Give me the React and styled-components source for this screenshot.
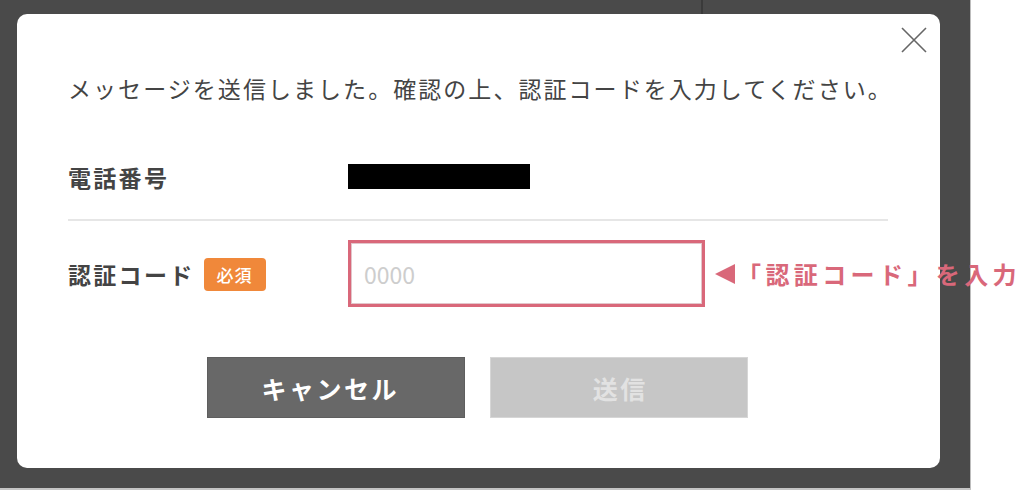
import React from "react";
import styled, { createGlobalStyle } from "styled-components";

const Global = createGlobalStyle`
  html, body { margin: 0; padding: 0; background: #fff; }
  body { font-family: "Noto Sans CJK JP", "Noto Sans", sans-serif; }
  * { box-sizing: border-box; }
`;

const Backdrop = styled.div`
  position: relative;
  width: 971px;
  height: 490px;
  background: #4a4a4a;
  border-right: 1px solid #bdbdbd;
  border-bottom: 2px solid #c4c4c4;
  padding: 14px 30px 20px 17px;
  &::before {
    content: "";
    position: absolute;
    left: 701px;
    top: 0;
    width: 2px;
    height: 14px;
    background: #3a3a3a;
  }
`;

const Modal = styled.div`
  position: relative;
  width: 923px;
  height: 454px;
  background: #fff;
  border-radius: 10px;
  padding: 59px 52px 50px 51px;
  display: flex;
  flex-direction: column;
`;

const Close = styled.button`
  position: absolute;
  top: 13px;
  right: 13px;
  width: 26px;
  height: 26px;
  padding: 0;
  border: none;
  background: none;
  display: flex;
`;

const Message = styled.p`
  margin: 0;
  height: 30px;
  line-height: 30px;
  font-size: 23px;
  letter-spacing: 2.05px;
  color: #444;
  white-space: nowrap;
`;

const Row = styled.div`
  display: flex;
  align-items: center;
  height: ${(p) => p.$h}px;
  margin-top: ${(p) => p.$mt}px;
`;

const Label = styled.div`
  width: 280px;
  flex: none;
  display: flex;
  align-items: center;
  font-size: 23px;
  font-weight: 700;
  letter-spacing: 2.3px;
  color: #444;
`;

const Badge = styled.span`
  margin-left: 9px;
  width: 62px;
  height: 33px;
  margin-top: 2px;
  border-radius: 4px;
  background: #f0883a;
  color: #fff;
  font-size: 17px;
  font-weight: 500;
  letter-spacing: 1px;
  display: flex;
  align-items: center;
  justify-content: center;
`;

const Redacted = styled.div`
  width: 182px;
  height: 25px;
  background: #000;
  margin-top: -1px;
`;

const Divider = styled.hr`
  margin: 17px 0 0;
  border: none;
  height: 2px;
  width: 820px;
  background: #e6e6e6;
`;

const Input = styled.input`
  width: 357px;
  height: 67px;
  flex: none;
  border: 3px solid #d9687a;
  box-shadow: inset 0 0 0 1px #e2c6cb;
  padding: 0 13px;
  font-family: inherit;
  font-size: 23px;
  color: #444;
  outline: none;
  &::placeholder { color: #cdcdcd; }
`;

const Note = styled.div`
  margin-left: 10px;
  display: flex;
  align-items: center;
  white-space: nowrap;
  color: #d9687a;
  font-size: 24px;
  font-weight: 700;
  letter-spacing: 4.4px;
`;

const Arrow = styled.span`
  width: 0;
  height: 0;
  border-top: 10px solid transparent;
  border-bottom: 10px solid transparent;
  border-right: 20px solid #d9687a;
  margin-right: 2px;
`;

const Buttons = styled.div`
  margin-top: 50px;
  display: flex;
  justify-content: center;
  gap: 25px;
  padding-right: 1px;
`;

const Button = styled.button`
  width: 258px;
  height: 61px;
  border: 1px solid ${(p) => (p.$primary ? "#5e5e5e" : "#d6d6d6")};
  background: ${(p) => (p.$primary ? "#686868" : "#c6c6c6")};
  color: ${(p) => (p.$primary ? "#fff" : "#e2e2e2")};
  font-family: inherit;
  font-size: 25px;
  font-weight: 700;
  letter-spacing: 2.5px;
  text-indent: 2.5px;
  padding: 0 ${(p) => (p.$primary ? "14px" : "0")} 0 0;
`;

export default function App() {
  return (
    <>
      <Global />
      <Backdrop>
        <Modal>
          <Close aria-label="close">
            <svg width="26" height="26" viewBox="0 0 26 26">
              <path d="M1 1 L25 25 M25 1 L1 25" stroke="#666" strokeWidth="1.6" fill="none" />
            </svg>
          </Close>
          <Message>メッセージを送信しました。確認の上、認証コードを入力してください。</Message>
          <Row $h={50} $mt={49}>
            <Label>電話番号</Label>
            <Redacted />
          </Row>
          <Divider />
          <Row $h={67} $mt={19}>
            <Label>
              認証コード<Badge>必須</Badge>
            </Label>
            <Input placeholder="0000" />
            <Note>
              <Arrow />
              「認証コード」を入力
            </Note>
          </Row>
          <Buttons>
            <Button $primary>キャンセル</Button>
            <Button>送信</Button>
          </Buttons>
        </Modal>
      </Backdrop>
    </>
  );
}
